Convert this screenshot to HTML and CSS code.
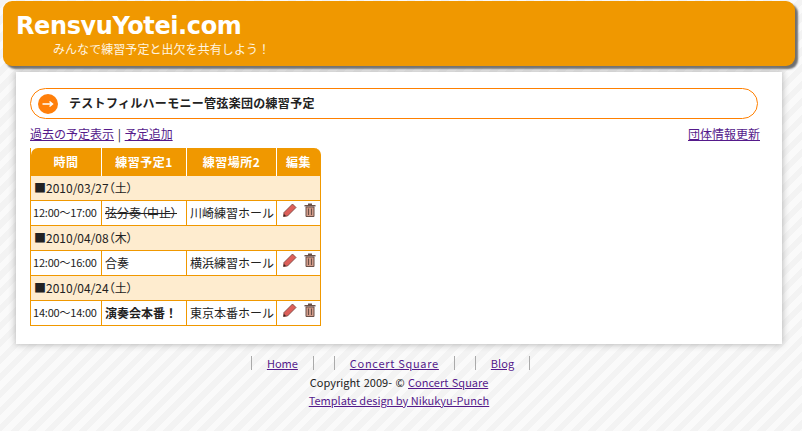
FILE: index.html
```html
<!DOCTYPE html>
<html lang="ja">
<head>
<meta charset="utf-8">
<title>RensyuYotei.com</title>
<link rel="stylesheet" href="styles.css">
</head>
<body>
<header class="site-header">
  <h1 class="site-title">RensyuYotei.com</h1>
  <p class="site-sub">みんなで練習予定と出欠を共有しよう！</p>
</header>
<main class="content">
  <h2 class="pill">
    <svg class="pill-icon" width="20" height="20" viewBox="0 0 20 20"><circle cx="10" cy="10" r="10" fill="#ff7f0a"/><path d="M4.500 10H14.500M11.500 7.500L14.500 10L11.500 12.500" fill="none" stroke="#fff" stroke-width="1.500"/></svg>
    <span>テストフィルハーモニー管弦楽団の練習予定</span>
  </h2>
  <div class="actions">
    <div class="action-left"><a href="#">過去の予定表示</a> | <a href="#">予定追加</a></div>
    <a href="#">団体情報更新</a>
  </div>
  <table class="schedule">
    <colgroup><col class="c1"><col class="c2"><col class="c3"><col class="c4"></colgroup>
    <thead>
      <tr><th class="first">時間</th><th>練習予定1</th><th>練習場所2</th><th class="last">編集</th></tr>
    </thead>
    <tbody>
      <tr class="date"><td colspan="4">■2010/03/27（土）</td></tr>
      <tr>
        <td class="time">12:00～17:00</td><td><s class="prop">弦分奏（中止）</s></td><td>川崎練習ホール</td>
        <td class="edit">
          <svg width="14" height="14" viewBox="0 0 14 14"><path d="M.5 13.500L1 9.500L9.500 1L13 4.500L4.500 13Z" fill="#dd5f5a" stroke="#6e4038" stroke-width=".8"/><path d="M.5 13.500L1 11L3 13Z" fill="#3a2420"/></svg>
          <svg width="12" height="14" viewBox="0 0 12 14"><path d="M4 .5H8V2H11.500V3.500H.5V2H4Z" fill="#6b5048"/><path d="M2 4H10V13.500H2Z" fill="#d09a88" stroke="#6b5048"/><path d="M4.500 5.500V12M7.500 5.500V12" stroke="#6b5048"/></svg>
        </td>
      </tr>
      <tr class="date"><td colspan="4">■2010/04/08（木）</td></tr>
      <tr>
        <td class="time">12:00～16:00</td><td>合奏</td><td>横浜練習ホール</td>
        <td class="edit">
          <svg width="14" height="14" viewBox="0 0 14 14"><path d="M.5 13.500L1 9.500L9.500 1L13 4.500L4.500 13Z" fill="#dd5f5a" stroke="#6e4038" stroke-width=".8"/><path d="M.5 13.500L1 11L3 13Z" fill="#3a2420"/></svg>
          <svg width="12" height="14" viewBox="0 0 12 14"><path d="M4 .5H8V2H11.500V3.500H.5V2H4Z" fill="#6b5048"/><path d="M2 4H10V13.500H2Z" fill="#d09a88" stroke="#6b5048"/><path d="M4.500 5.500V12M7.500 5.500V12" stroke="#6b5048"/></svg>
        </td>
      </tr>
      <tr class="date"><td colspan="4">■2010/04/24（土）</td></tr>
      <tr>
        <td class="time">14:00～14:00</td><td><b>演奏会本番！</b></td><td>東京本番ホール</td>
        <td class="edit">
          <svg width="14" height="14" viewBox="0 0 14 14"><path d="M.5 13.500L1 9.500L9.500 1L13 4.500L4.500 13Z" fill="#dd5f5a" stroke="#6e4038" stroke-width=".8"/><path d="M.5 13.500L1 11L3 13Z" fill="#3a2420"/></svg>
          <svg width="12" height="14" viewBox="0 0 12 14"><path d="M4 .5H8V2H11.500V3.500H.5V2H4Z" fill="#6b5048"/><path d="M2 4H10V13.500H2Z" fill="#d09a88" stroke="#6b5048"/><path d="M4.500 5.500V12M7.500 5.500V12" stroke="#6b5048"/></svg>
        </td>
      </tr>
    </tbody>
  </table>
</main>
<footer class="site-footer">
  <ul class="foot-nav">
    <li><a href="#">Home</a></li>
    <li><a class="wide" href="#">Concert Square</a></li>
    <li><a href="#">Blog</a></li>
  </ul>
  <p class="copy">Copyright 2009- © <a href="#">Concert Square</a></p>
  <p><a href="#">Template design by Nikukyu-Punch</a></p>
</footer>
</body>
</html>
```

FILE: styles.css
```css
* { box-sizing: border-box; }
html, body { height: 100%; }
body {
  margin: 0;
  overflow: hidden;
  font-family: "Noto Sans CJK JP", "Liberation Sans", sans-serif;
  font-size: 12px;
  color: #222;
  background: repeating-linear-gradient(135deg, #f3f3f3 0 6px, #fafafa 6px 12px);
}
a { color: #551a8b; }
p { margin: 0; }
.site-header {
  height: 65px;
  margin: 1px 7px 0 3px;
  padding: 10px 0 0 13px;
  background: #f09800;
  border-radius: 9px;
  box-shadow: 3px 3px 2px #6f6f6f;
  color: #fff;
}
.site-title {
  margin: 0;
  height: 24px;
  overflow: hidden;
  font: bold 24px/30px "DejaVu Sans", sans-serif;
  letter-spacing: -.4px;
}
.site-sub {
  margin: 5px 0 0 37px;
  font-size: 12px;
  line-height: 18px;
  letter-spacing: .06px;
  color: #fff4e0;
}
.content {
  height: 272px;
  margin: 6px 20px 0 16px;
  padding: 16px 14px 0;
  background: #fff;
  box-shadow: 0 0 7px #aaa;
}
.pill {
  display: flex;
  align-items: center;
  gap: 11px;
  width: 728px;
  height: 31px;
  margin: 0;
  padding: 0 0 2px 7px;
  border: 1px solid #ff8000;
  border-radius: 16px;
  font-size: 12px;
  font-weight: bold;
  letter-spacing: .3px;
  color: #222;
}
.pill-icon { margin-top: 2px; }
.actions {
  display: flex;
  justify-content: space-between;
  width: 730px;
  margin-top: 6px;
  line-height: 18px;
}
.action-left { word-spacing: 1px; }
.schedule {
  width: 291px;
  margin-top: 5px;
  table-layout: fixed;
  border-collapse: separate;
  border-spacing: 0;
  border-left: 1px solid #f09800;
}
.c1 { width: 71px; }
.c2 { width: 85px; }
.c3 { width: 90px; }
.c4 { width: 44px; }
.schedule th {
  height: 28px;
  padding: 0 0 1px;
  background: #f09800;
  color: #fff;
  font-size: 12px;
  letter-spacing: .5px;
  border-right: 1px solid #fff;
}
.schedule th.first { border-top-left-radius: 7px; }
.schedule th.last { border-top-right-radius: 7px; border-right: 1px solid #f09800; }
.schedule td {
  height: 25px;
  padding: 0 3px 2px;
  background: #fff;
  white-space: nowrap;
  border-right: 1px solid #f09800;
  border-bottom: 1px solid #f09800;
}
.schedule .date td { background: #feeccf; font-feature-settings: "palt"; }
.prop { font-feature-settings: "palt"; }
.schedule td.time { font-size: 11px; padding: 0 2px 2px; letter-spacing: -.2px; }
.schedule td.edit { padding: 0 0 7px 6px; line-height: 14px; }
.edit svg { vertical-align: top; margin-right: 4px; }
.site-footer {
  margin-top: 10px;
  padding-right: 4px;
  text-align: center;
  font-size: 11px;
  line-height: 18px;
}
.foot-nav {
  display: flex;
  justify-content: center;
  gap: 20px;
  margin: 0 0 3px;
  padding: 0 17px 0 0;
  list-style: none;
}
.foot-nav li {
  padding: 0 15px;
  border-left: 1px solid #aaa;
  border-right: 1px solid #aaa;
  line-height: 14px;
  margin-top: 2px;
}
.wide { letter-spacing: .7px; }
.copy { word-spacing: 1px; }
```
